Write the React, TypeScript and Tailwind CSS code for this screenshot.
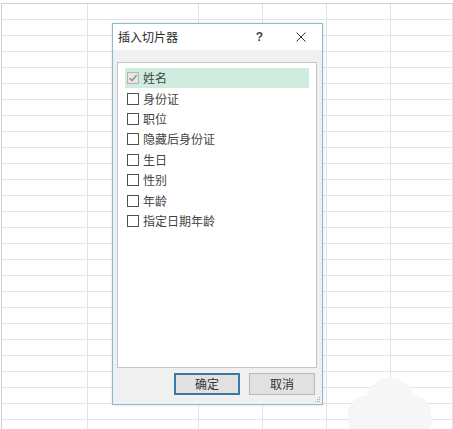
import React from "react";

const widths = ["w-[86px]", "w-[111px]", "w-[64px]", "w-[64px]", "w-[64px]", "flex-1"];

function Grid() {
  const rows = Array.from({ length: 27 });
  return (
    <div className="mt-[3px] ml-[1px] border-t border-l border-[#d0d0d0] flex flex-col">
      {rows.map((_, i) => (
        <div key={i} className="flex h-[16px] border-b border-[#e3e3e3] shrink-0">
          {widths.map((w, j) => (
            <div key={j} className={`${w} h-full border-r border-[#e3e3e3] shrink-0`} />
          ))}
        </div>
      ))}
    </div>
  );
}

function CheckBox({ checked }: { checked?: boolean }) {
  if (checked) {
    return (
      <span className="w-[12px] h-[12px] border border-[#b5b5b5] bg-[#e6e6e6] flex items-center justify-center shrink-0">
        <svg width="10" height="10" viewBox="0 0 10 10">
          <path d="M1.5 5.2 L4 7.6 L8.6 2.2" fill="none" stroke="#8a8a8a" strokeWidth="1.4" />
        </svg>
      </span>
    );
  }
  return <span className="w-[12px] h-[12px] border border-[#505050] bg-white shrink-0" />;
}

const items = ["姓名", "身份证", "职位", "隐藏后身份证", "生日", "性别", "年龄", "指定日期年龄"];

export default function App() {
  return (
    <div
      className="relative w-[453px] h-[429px] overflow-hidden bg-white"
      style={{ fontFamily: '"Noto Sans CJK SC", "Noto Sans", sans-serif' }}
    >
      <Grid />

      {/* cloud watermark */}
      <svg className="absolute left-[340px] top-[370px]" width="95" height="62" viewBox="0 0 95 62">
        <g fill="#f6f6f6">
          <ellipse cx="50" cy="30" rx="24" ry="22" />
          <circle cx="26" cy="44" r="18" />
          <circle cx="72" cy="44" r="19" />
          <rect x="8" y="42" width="84" height="20" rx="10" />
        </g>
      </svg>

      {/* dialog */}
      <div className="absolute left-[112px] top-[23px] w-[211px] h-[382px] border border-[#8cbccc] bg-[#f0f0f0] flex flex-col shadow-[0_0_3px_rgba(0,0,0,0.12)]">
        <div className="h-[26px] bg-white flex items-center pl-[5px] shrink-0">
          <span className="text-[12px] text-[#2a2a2a] leading-none">插入切片器</span>
          <span className="ml-auto text-[12px] font-semibold text-[#444] leading-none mr-[33px]" style={{ fontFamily: '"Liberation Sans", sans-serif' }}>?</span>
          <svg className="mr-[16px]" width="10" height="10" viewBox="0 0 10 10">
            <path d="M0.5 0.5 L9.5 9.5 M9.5 0.5 L0.5 9.5" stroke="#333" strokeWidth="1" />
          </svg>
        </div>
        <div className="flex-1 flex flex-col px-[4px] pt-[12px] pb-[9px] relative">
          <div className="h-[306px] mr-[1px] bg-white border border-[#c4c4c4] pt-[5px] pl-[7px] pr-[7px]">
            {items.map((t, i) => (
              <div
                key={t}
                className={`h-[20.4px] flex items-center gap-[4px] pl-[2px] ${i === 0 ? "bg-[#d0ecdf]" : ""}`}
              >
                <CheckBox checked={i === 0} />
                <span className="text-[12px] text-[#444] leading-none">{t}</span>
              </div>
            ))}
          </div>
          <div className="mt-[5px] flex justify-end gap-[9px] pr-[3px]">
            <button className="w-[66px] h-[22px] bg-[#e1e1e1] border-2 border-[#3b7aa8] text-[12px] text-[#333] flex items-center justify-center">
              确定
            </button>
            <button className="w-[66px] h-[22px] bg-[#e1e1e1] border border-[#b8b8b8] text-[12px] text-[#333] flex items-center justify-center">
              取消
            </button>
          </div>
          <svg className="absolute right-[1px] bottom-[1px]" width="7" height="7" viewBox="0 0 7 7">
            <g fill="#a8a8a8">
              <rect x="5" y="1" width="1" height="1" />
              <rect x="3" y="3" width="1" height="1" />
              <rect x="5" y="3" width="1" height="1" />
              <rect x="1" y="5" width="1" height="1" />
              <rect x="3" y="5" width="1" height="1" />
              <rect x="5" y="5" width="1" height="1" />
            </g>
          </svg>
        </div>
      </div>
    </div>
  );
}
